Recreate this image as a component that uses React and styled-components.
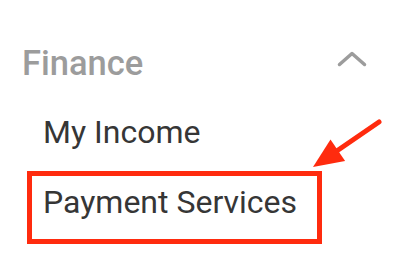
import React from 'react';
import styled, { createGlobalStyle } from 'styled-components';

const GlobalStyle = createGlobalStyle`
  html, body {
    margin: 0;
    padding: 0;
    background: #ffffff;
  }
  body {
    font-family: Roboto, "Liberation Sans", Arial, sans-serif;
  }
`;

const Styled = {
  Page: styled.div`
    position: relative;
    width: 401px;
    height: 279px;
    overflow: hidden;
    background: #ffffff;
  `,
  Section: styled.section`
    display: flex;
    flex-direction: column;
    padding: 43px 0 0 22px;
    width: 346px;
  `,
  Header: styled.div`
    display: flex;
    align-items: center;
    justify-content: space-between;
    height: 40px;
  `,
  Title: styled.span`
    font-size: 34.5px;
    line-height: 40px;
    font-weight: 500;
    color: #9c9c9c;
  `,
  Chevron: styled.svg`
    width: 32px;
    height: 20px;
    margin-top: -6px;
  `,
  List: styled.ul`
    list-style: none;
    display: flex;
    flex-direction: column;
    gap: 7px;
    margin: 23px 0 0 10px;
    padding: 0;
  `,
  Item: styled.li`
    width: 274px;
    height: 36px;
    padding: 8px 0 19px 11px;
    font-size: 32px;
    line-height: 36px;
    font-weight: 400;
    color: #363636;
    white-space: nowrap;
    outline: ${({ $selected }) => ($selected ? '5px solid #ff2b0e' : 'none')};
  `,
  Arrow: styled.svg`
    position: absolute;
    top: 0;
    left: 0;
    width: 401px;
    height: 279px;
    pointer-events: none;
  `,
};

const items = [
  { label: 'My Income', selected: false },
  { label: 'Payment Services', selected: true },
];

const App = () => {
  return (
    <Styled.Page>
      <GlobalStyle />
      <Styled.Section>
        <Styled.Header>
          <Styled.Title>Finance</Styled.Title>
          <Styled.Chevron viewBox="0 0 32 20">
            <polyline
              points="3.5,14.5 16,3.5 28.5,14.5"
              fill="none"
              stroke="#9c9c9c"
              strokeWidth="3.5"
              strokeLinecap="round"
              strokeLinejoin="round"
            />
          </Styled.Chevron>
        </Styled.Header>
        <Styled.List>
          {items.map((item) => (
            <Styled.Item key={item.label} $selected={item.selected}>
              {item.label}
            </Styled.Item>
          ))}
        </Styled.List>
      </Styled.Section>
      {/* annotation arrow pointing at the selected item */}
      <Styled.Arrow viewBox="0 0 401 279">
        <line
          x1="379"
          y1="122"
          x2="336"
          y2="151.5"
          stroke="#ff2b0e"
          strokeWidth="5"
          strokeLinecap="round"
        />
        <polygon points="313,167 330.5,139.4 345.1,161" fill="#ff2b0e" />
      </Styled.Arrow>
    </Styled.Page>
  );
};

export default App;
